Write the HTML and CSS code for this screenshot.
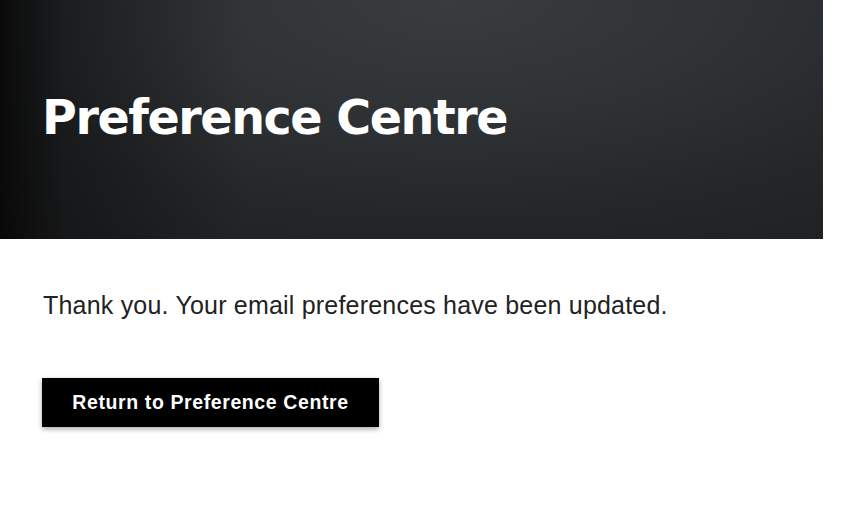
FILE: index.html
```html
<!DOCTYPE html>
<html lang="en">
<head>
<meta charset="utf-8">
<title>Preference Centre</title>
<link rel="stylesheet" href="styles.css">
</head>
<body>
<header class="hero">
  <h1 class="hero-title">Preference Centre</h1>
</header>
<main class="content">
  <p class="message">Thank you. Your email preferences have been updated.</p>
  <a class="btn" href="#">Return to Preference Centre</a>
</main>
</body>
</html>
```
FILE: styles.css
```css
html, body {
  margin: 0;
  padding: 0;
  background: #ffffff;
}
body {
  font-family: "Liberation Sans", Arial, sans-serif;
  width: 845px;
  height: 508px;
  overflow: hidden;
}
.hero {
  width: 823px;
  height: 239px;
  box-sizing: border-box;
  padding: 0 0 0 43px;
  display: flex;
  align-items: center;
  background:
    linear-gradient(90deg, rgba(5,5,5,0.85) 0%, rgba(10,10,10,0.45) 8%, rgba(20,20,20,0) 30%),
    radial-gradient(ellipse 95% 130% at 55% 0%, #393c3f 0%, #303336 35%, #242628 70%, #1e1f21 100%);
  background-color: #1f2022;
}
.hero-title {
  margin: -4px 0 0 -1px;
  font-family: "DejaVu Sans", sans-serif;
  font-weight: 700;
  font-size: 47.5px;
  color: #ffffff;
  letter-spacing: -1.4px;
}
.content {
  padding: 0 0 0 42px;
}
.message {
  margin: 52px 0 0 1px;
  font-size: 25px;
  color: #222222;
  line-height: 28px;
  letter-spacing: 0.2px;
}
.btn {
  display: inline-block;
  margin-top: 59px;
  width: 337px;
  height: 49px;
  line-height: 49px;
  text-align: center;
  background: #000000;
  color: #ffffff;
  font-weight: 700;
  font-size: 19.5px;
  letter-spacing: 0.6px;
  text-decoration: none;
  box-shadow: 0 2px 5px rgba(0,0,0,0.35);
}
```
